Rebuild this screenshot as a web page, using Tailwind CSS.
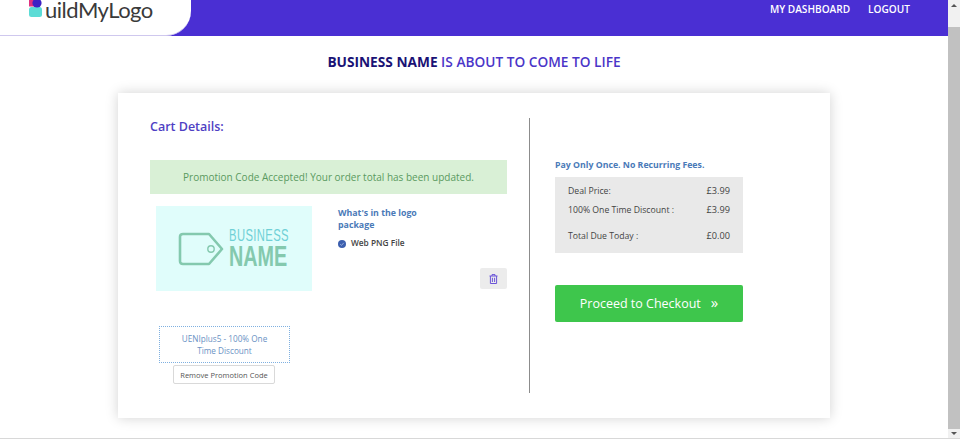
<!DOCTYPE html>
<html lang="en">
<head>
    <meta charset="UTF-8">
    <title>BuildMyLogo Cart</title>
    <script src="https://cdn.jsdelivr.net/npm/@tailwindcss/browser@4"></script>
</head>
<body class="w-[960px] h-[440px] overflow-hidden bg-white font-['Open_Sans',sans-serif]">
    <div class="h-[439px] flex border-b border-[#d8d8d8]">
    <div class="w-[948px] flex flex-col">
        <!-- Header -->
        <header class="h-[36px] shrink-0 bg-[#4a2fd3] flex justify-between overflow-hidden">
            <div class="w-[191px] h-[36px] bg-white rounded-br-[25px] border-b border-[#cfc8ee] pl-[29px] flex items-start">
                <svg class="w-[13px] h-[17px] shrink-0" viewBox="0 0 13 17">
                    <rect x="0" y="7" width="13" height="10" rx="2.5" fill="#5cdcd6"/>
                    <path d="M0 0H6V6.5H0Z" fill="#e0317f"/>
                    <circle cx="8" cy="3" r="4.6" fill="#3d22c4"/>
                </svg>
                <span class="font-['Lato',sans-serif] text-[22px] leading-[20px] text-[#3a3a3a] tracking-[-0.5px] ml-[3px]">uildMyLogo</span>
            </div>
            <nav class="flex gap-[18px] pr-[38px] pt-[1px] text-[10.1px] leading-[16px] font-semibold text-white">
                <a>MY DASHBOARD</a>
                <a>LOGOUT</a>
            </nav>
        </header>

        <h1 class="mt-[16px] text-center text-[13.7px] leading-[20px] font-semibold text-[#4a35c8]"><span class="font-bold text-[#1a1275]">BUSINESS NAME</span> IS ABOUT TO COME TO LIFE</h1>

        <!-- Card -->
        <main class="ml-[118px] mt-[21px] w-[712px] h-[325px] bg-white shadow-[0_0_12px_rgba(0,0,0,0.18)] flex">
            <section class="w-[411px] pl-[32px] pt-[25px]">
                <h2 class="text-[12.5px] leading-[18px] font-semibold text-[#4f3fc4]">Cart Details:</h2>
                <div class="mt-[24px] w-[357px] h-[34px] bg-[#d9f0d6] flex items-center justify-center text-[10px] text-[#5a9a60]">Promotion Code Accepted! Your order total has been updated.</div>

                <div class="mt-[12px] w-[357px] flex">
                    <div class="ml-[6px] w-[156px] h-[85px] bg-[#e0fdfb] flex items-center gap-[5px] pl-[22px]">
                        <svg class="w-[46px] h-[34px] shrink-0" viewBox="0 0 46 34" fill="none" stroke="#84c9ae" stroke-width="2.6">
                            <path d="M5 2H31L44 17L31 32H5Q2 32 2 29V5Q2 2 5 2Z" stroke-linejoin="round"/>
                            <circle cx="33" cy="17" r="3.2" stroke-width="1.4"/>
                        </svg>
                        <div class="w-[60px] font-['Liberation_Sans',sans-serif] flex flex-col items-start whitespace-nowrap">
                            <span class="text-[16.5px] leading-[15px] text-[#6fd0d6] tracking-[0.6px] scale-x-[0.68] origin-left">BUSINESS</span>
                            <span class="text-[30px] leading-[26px] font-bold text-[#84c9ae] scale-x-[0.66] origin-left">NAME</span>
                        </div>
                    </div>
                    <div class="ml-[26px] flex-1 flex flex-col">
                        <h3 class="w-[100px] text-[8.8px] leading-[12px] font-bold text-[#4a7ab8] mt-[1px]">What's in the logo package</h3>
                        <div class="mt-[6px] flex items-center gap-[5px] text-[8.3px] leading-[12px] font-semibold text-[#444]">
                            <svg class="w-[8px] h-[8px] mt-[1px]" viewBox="0 0 8 8">
                                <circle cx="4" cy="4" r="4" fill="#3c5fae"/>
                                <path d="M2.2 4.2L3.5 5.4L5.8 2.8" fill="none" stroke="#a9bde6" stroke-width="0.8"/>
                            </svg>
                            <span>Web PNG File</span>
                        </div>
                        <button class="self-end mt-[19px] w-[27px] h-[21px] bg-[#ececec] rounded-[2px] flex items-center justify-center">
                            <svg class="w-[9px] h-[10px]" viewBox="0 0 9 10" fill="none" stroke="#6b54d8" stroke-width="1">
                                <path d="M0.5 2H8.5M3 2V0.6H6V2M1.4 2V9.5H7.6V2M3.4 3.8V8M5.6 3.8V8"/>
                            </svg>
                        </button>
                    </div>
                </div>

                <div class="mt-[35px] ml-[9px] w-[131px]">
                    <div class="h-[37px] border border-dotted border-[#7fb0e0] flex items-center justify-center text-center text-[8.2px] leading-[12px] text-[#6a92c4]">UENIplus5 - 100% One<br>Time Discount</div>
                    <button class="block ml-[14px] mt-[2px] w-[102px] h-[19px] bg-white border border-[#d9d9d9] rounded-[2px] text-[7.5px] leading-[16px] text-[#555]">Remove Promotion Code</button>
                </div>
            </section>

            <div class="mt-[25px] w-px h-[275px] bg-[#8c8c8c]"></div>

            <section class="ml-[25px] w-[188px] pt-[66px]">
                <p class="text-[8.75px] leading-[12px] font-bold text-[#4a7ab8]">Pay Only Once. No Recurring Fees.</p>
                <div class="mt-[6px] h-[76px] bg-[#e9e9e9] pl-[13px] pr-[13px] pt-[7px] text-[8.7px] text-[#444]">
                    <div class="flex justify-between leading-[14px]"><span>Deal Price:</span><span class="text-[9.2px]">£3.99</span></div>
                    <div class="mt-[5px] flex justify-between leading-[14px]"><span>100% One Time Discount :</span><span class="text-[9.2px]">£3.99</span></div>
                    <div class="mt-[12px] flex justify-between leading-[14px]"><span>Total Due Today :</span><span class="text-[9.2px]">£0.00</span></div>
                </div>
                <button class="mt-[32px] w-[188px] h-[37px] bg-[#3ec64c] rounded-[2px] text-white text-[12.5px] flex items-center justify-center gap-[10px] pt-[1px]">
                    <span>Proceed to Checkout</span>
                    <span class="text-[15px] leading-[13px] -mt-[3px]">»</span>
                </button>
            </section>
        </main>
    </div>

    <!-- Scrollbar -->
    <div class="w-[12px] bg-[#f1f1f1] flex flex-col items-center">
        <div class="h-[11px] flex items-center"><div class="border-x-[3px] border-x-transparent border-b-[3px] border-b-[#555]"></div></div>
        <div class="mt-[16px] w-full h-[402px] bg-[#c1c1c1]"></div>
        <div class="flex-1 flex items-center"><div class="border-x-[3px] border-x-transparent border-t-[3px] border-t-[#555]"></div></div>
    </div>
    </div>
</body>
</html>
